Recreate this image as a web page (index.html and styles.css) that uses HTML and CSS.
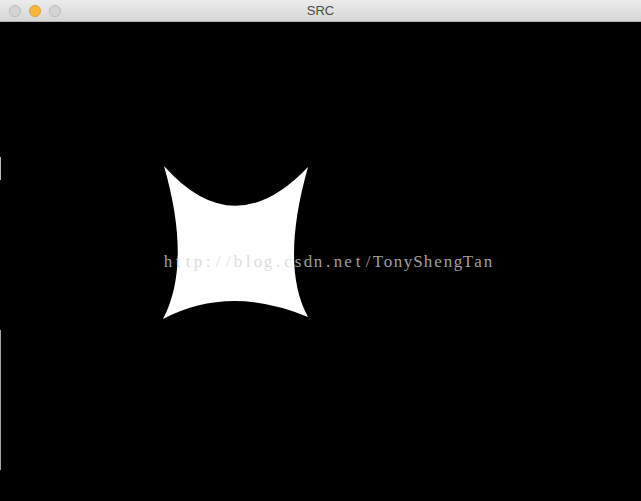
FILE: index.html
```html
<!DOCTYPE html>
<html>
<head>
<meta charset="utf-8">
<link rel="stylesheet" href="styles.css">
</head>
<body>
<div class="window">
  <div class="titlebar">
    <div class="lights">
      <span class="light light-off"></span>
      <span class="light light-min"></span>
      <span class="light light-off"></span>
    </div>
    <div class="title">SRC</div>
  </div>
  <div class="canvas">
    <svg class="scene" width="641" height="479" viewBox="0 22 641 479" xmlns="http://www.w3.org/2000/svg">
      <rect x="0" y="157" width="1" height="23" fill="#b8b8b8"/>
      <rect x="0" y="330" width="1" height="140" fill="#a0a0a0"/>
      <path d="M164 166 Q234 245 308 167 Q280 266 308 317 Q229 284 163 319 Q192 264 164 166 Z" fill="#ffffff"/>
      <text class="watermark" y="267" text-anchor="middle" x="168 178 188 198 208 218 228 238 248 258 268 278 288 298 308 318 328 338 348 358 368 378 388 398 408 418 428 438 448 458 468 478 488">http://blog.csdn.net/TonyShengTan</text>
    </svg>
  </div>
</div>
</body>
</html>
```

FILE: styles.css
```css
html, body {
  margin: 0;
  padding: 0;
  background: #000;
}
.window {
  width: 641px;
  height: 501px;
  display: flex;
  flex-direction: column;
  overflow: hidden;
}
.titlebar {
  height: 21px;
  flex: none;
  border-bottom: 1px solid #b2b2b2;
  background: linear-gradient(#ececec, #d6d6d6);
  display: flex;
  align-items: center;
  position: relative;
}
.lights {
  display: flex;
  gap: 8px;
  padding-left: 9px;
}
.light {
  width: 10px;
  height: 10px;
  border-radius: 50%;
  box-sizing: content-box;
}
.light-off {
  background: #d4d4d4;
  border: 1px solid #bcbcbc;
}
.light-min {
  background: #f8b73a;
  border: 1px solid #dea033;
}
.title {
  position: absolute;
  left: 0;
  right: 0;
  top: 0;
  line-height: 22px;
  text-align: center;
  font-family: "Liberation Sans", Arial, sans-serif;
  font-size: 13px;
  color: #4a4a4a;
}
.canvas {
  flex: 1;
  background: #000;
}
.scene {
  display: block;
}
.watermark {
  font-family: "Liberation Serif", "DejaVu Serif", serif;
  font-size: 17px;
  fill: rgba(210, 210, 205, 0.78);
}
```
